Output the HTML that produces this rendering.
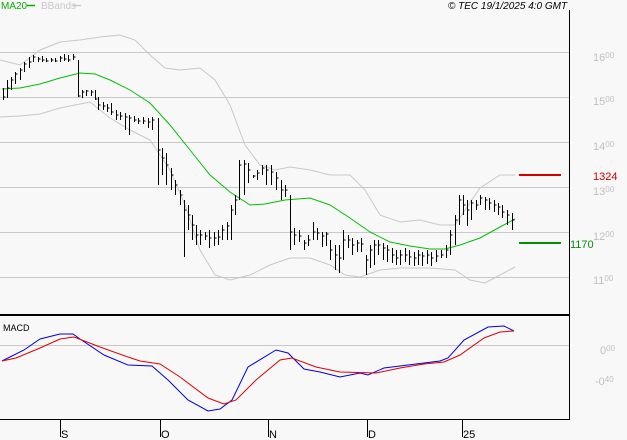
<!DOCTYPE html>
<html><head><meta charset="utf-8"><style>
html,body{margin:0;padding:0;background:#f8f8f8;}
svg{display:block;}
text{font-family:"Liberation Sans",sans-serif;}
</style></head><body>
<svg width="627" height="440" viewBox="0 0 627 440" xmlns="http://www.w3.org/2000/svg">
<rect width="627" height="440" fill="#f8f8f8"/>
<g stroke="#c8c8c8" stroke-width="1" fill="none">
<path d="M0 52.5H569M0 97.5H569M0 142.5H569M0 187.5H569M0 232.5H569M0 277.5H569M0 345.5H569"/>
</g>
<text x="1" y="9" font-size="10" fill="#00b000">MA20</text>
<path d="M27 5.5H35" stroke="#00b000" stroke-width="1.5"/>
<text x="41" y="9" font-size="10" fill="#c8c8c8">BBands</text>
<path d="M73 5.5H81" stroke="#c8c8c8" stroke-width="1.5"/>
<text x="448" y="9" font-size="10" font-style="italic" fill="#000">© TEC 19/1/2025 4:0 GMT</text>
<polyline fill="none" stroke="#c8c8c8" stroke-width="1" points="0,60 20,65 40,50 60,42 80,40 100,37 120,35 135,40 150,55 165,68 180,70 200,68 215,80 230,105 245,145 260,165 275,170 290,167 310,170 330,175 350,175 365,190 380,215 400,222 420,220 440,225 455,225 465,210 480,188 500,175 515,175"/>
<polyline fill="none" stroke="#c8c8c8" stroke-width="1" points="0,117 20,116 40,114 60,108 80,104 90,102 110,118 130,130 150,140 170,170 185,205 200,250 215,275 230,280 250,275 270,265 290,258 310,258 330,265 345,275 360,277 380,270 400,268 430,268 455,270 470,280 485,283 500,275 515,267"/>
<polyline fill="none" stroke="#00c000" stroke-width="1" points="2,89 20,88 40,84 60,78 80,73 95,74 110,80 130,90 150,103 170,125 190,150 210,175 230,192 250,205 265,204 285,200 310,198 330,205 350,218 370,232 390,242 410,246 430,249 445,249 460,245 480,238 500,227 515,219"/>
<path fill="none" stroke="#000" stroke-width="1" shape-rendering="crispEdges" transform="translate(0.5,0)" d="M3 88V100M3 97h2M7 80V98M7 88h2M11 77V90M11 80h2M15 72V84M15 74h2M20 68V80M20 70h2M24 62V72M24 64h2M29 57V68M29 62h2M33 55V62M33 57h2M38 57V62M38 59h2M42 56V62M42 60h2M46 58V62M46 61h2M51 58V62M51 60h2M55 58V62M55 61h2M60 56V62M60 58h2M64 54V61M64 59h2M68 55V62M68 60h2M73 54V60M73 57h2M78 60V97M78 96h2M82 90V98M82 92h2M86 90V96M86 91h2M91 90V96M91 92h2M95 90V100M95 99h2M98 97V110M98 105h2M103 102V110M103 106h2M107 104V112M107 108h2M111 103V115M111 112h2M116 110V120M116 115h2M120 112V120M120 116h2M125 113V130M125 117h2M129 115V135M129 118h2M134 116V122M134 120h2M138 118V124M138 121h2M143 117V124M143 121h2M148 118V128M148 122h2M152 117V130M152 120h2M158 118V185M158 150h2M162 148V175M162 158h2M166 153V185M166 165h2M171 168V190M171 175h2M175 180V195M175 185h2M180 190V205M180 195h2M184 200V257M184 210h2M188 205V230M188 215h2M192 215V240M192 225h2M196 225V245M196 235h2M200 230V245M200 235h2M205 232V240M205 236h2M209 230V248M209 238h2M214 232V246M214 238h2M218 230V245M218 237h2M222 225V240M222 230h2M227 222V240M227 226h2M231 205V240M231 210h2M235 195V215M235 200h2M239 160V200M239 165h2M244 160V195M244 164h2M248 163V183M248 170h2M253 175V178M253 176h2M257 170V180M257 173h2M262 165V175M262 168h2M266 165V185M266 170h2M271 165V185M271 172h2M276 172V190M276 178h2M281 180V200M281 190h2M285 185V197M285 190h2M290 195V250M290 232h2M294 228V245M294 235h2M299 230V242M299 236h2M304 240V250M304 243h2M308 235V246M308 240h2M313 222V240M313 232h2M317 228V240M317 233h2M322 232V247M322 236h2M326 232V246M326 234h2M330 240V260M330 250h2M335 245V270M335 255h2M339 245V273M339 258h2M343 230V260M343 240h2M348 235V248M348 240h2M352 238V255M352 245h2M357 240V252M357 243h2M361 238V252M361 244h2M366 255V275M366 260h2M370 245V268M370 250h2M374 240V265M374 245h2M378 240V255M378 245h2M383 243V260M383 248h2M387 245V262M387 250h2M392 248V263M392 255h2M396 250V265M396 258h2M400 250V265M400 255h2M405 248V262M405 255h2M409 250V265M409 257h2M414 252V266M414 258h2M418 250V265M418 255h2M422 252V266M422 256h2M427 250V264M427 255h2M431 252V266M431 258h2M436 250V262M436 256h2M441 250V258M441 255h2M446 245V258M446 250h2M450 230V255M450 235h2M455 215V245M455 220h2M459 195V225M459 200h2M463 195V215M463 205h2M467 200V226M467 210h2M471 200V220M471 203h2M476 200V210M476 205h2M480 195V205M480 198h2M485 197V210M485 200h2M489 198V210M489 203h2M494 200V212M494 205h2M498 203V215M498 207h2M502 205V218M502 212h2M507 210V225M507 215h2M512 213V230M512 220h2"/>
<path d="M519 175H561" stroke="#d00000" stroke-width="2"/>
<path d="M519 243H561" stroke="#009000" stroke-width="2"/>
<text x="593" y="180" font-size="11" fill="#d00000">1324</text>
<text x="570" y="248" font-size="11" fill="#009000">1170</text>
<g font-size="11" fill="#c0c0c0">
<text x="593" y="61">16<tspan font-size="8" dy="-3">00</tspan></text>
<text x="593" y="105">15<tspan font-size="8" dy="-3">00</tspan></text>
<text x="593" y="150">14<tspan font-size="8" dy="-3">00</tspan></text>
<text x="593" y="195">13<tspan font-size="8" dy="-3">00</tspan></text>
<text x="593" y="240">12<tspan font-size="8" dy="-3">00</tspan></text>
<text x="593" y="284">11<tspan font-size="8" dy="-3">00</tspan></text>
<text x="600" y="354">0<tspan font-size="8" dy="-3">00</tspan></text>
<text x="595" y="385">-0<tspan font-size="8" dy="-3">40</tspan></text>
</g>
<path d="M569.5 10V419.5H0" stroke="#000" stroke-width="1" fill="none"/>
<path d="M0 315H569" stroke="#000" stroke-width="2"/>
<text x="3" y="331" font-size="9" fill="#000">MACD</text>
<polyline fill="none" stroke="#0000e0" stroke-width="1" points="2,361 24,350 40,339 60,334 73,334 80,339 104,355 128,365 152,366 168,380 188,400 208,411 220,409 232,400 248,367 276,350 288,353 304,369 320,372 340,377 360,373 368,375 384,368 400,366 424,363 440,361 448,358 464,340 488,327 504,326 514,331"/>
<polyline fill="none" stroke="#e00000" stroke-width="1" points="2,361 16,358 40,348 60,339 74,337 100,347 128,357 140,361 160,364 180,377 208,398 224,404 236,400 256,380 280,360 292,358 316,367 340,372 376,373 400,368 424,364 444,362 460,355 484,338 500,332 514,331"/>
<path d="M60.5 420V437M160.5 420V437M268.5 420V437M367.5 420V437M462.5 420V437" stroke="#000" stroke-width="1"/>
<g font-size="11" fill="#000">
<text x="61" y="438">S</text><text x="161" y="438">O</text><text x="269" y="438">N</text><text x="368" y="438">D</text><text x="463" y="438">25</text>
</g>
</svg>
</body></html>
